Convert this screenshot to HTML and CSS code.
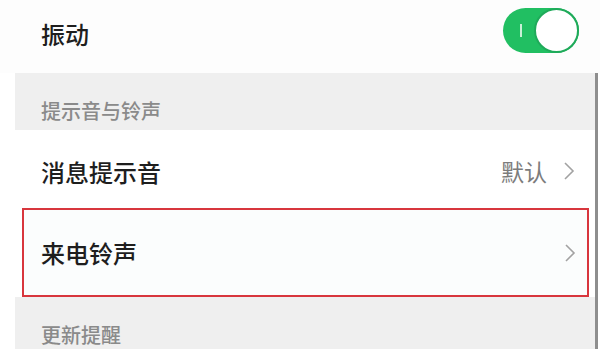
FILE: index.html
```html
<!DOCTYPE html>
<html lang="zh-CN">
<head>
  <meta charset="UTF-8" />
  <meta name="viewport" content="width=device-width, initial-scale=1.0"/>
  <title>新消息通知</title>
  <link rel="stylesheet" href="styles.css">
</head>
<body>
  <div class="screen">
    <div class="row-top">
      <span class="label">振动</span>
      <div class="switch on">
        <span class="mark"></span>
        <span class="knob"></span>
      </div>
    </div>

    <div class="panel">
      <div class="section-title">提示音与铃声</div>

      <div class="row">
        <span class="label">消息提示音</span>
        <div class="right">
          <span class="value">默认</span>
          <svg class="chevron" width="12" height="20" viewBox="0 0 12 20">
            <polyline points="2,2 10,10 2,18" />
          </svg>
        </div>
      </div>

      <div class="row-wrap">
        <div class="row boxed">
          <span class="label">来电铃声</span>
          <svg class="chevron" width="12" height="20" viewBox="0 0 12 20">
            <polyline points="2,2 10,10 2,18" />
          </svg>
        </div>
      </div>

      <div class="section-title last">更新提醒</div>
    </div>
  </div>
</body>
</html>
```

FILE: styles.css
```css
html, body {
  margin: 0;
  padding: 0;
  background: #fff;
}
body {
  font-family: "Noto Sans CJK SC", "Noto Sans", sans-serif;
  color: #222;
}
.screen {
  width: 600px;
  height: 349px;
  overflow: hidden;
}
.label {
  font-size: 24px;
  font-weight: 500;
  color: #1e1e1e;
}
.row-top {
  height: 73px;
  display: flex;
  align-items: center;
  justify-content: space-between;
  padding: 0 21px 12px 41px;
  box-sizing: border-box;
  background: #fdfdfd;
}
.row-top .label {
  margin-top: 5px;
}
.switch {
  position: relative;
  width: 76px;
  height: 45px;
  border-radius: 23px;
  background: #21bf62;
  box-sizing: border-box;
}
.switch .mark {
  position: absolute;
  left: 17px;
  top: 16px;
  width: 2px;
  height: 13px;
  background: #c9f0d6;
}
.switch .knob {
  position: absolute;
  right: 0;
  top: 0;
  width: 45px;
  height: 45px;
  border-radius: 50%;
  background: #fff;
  border: 2px solid #1faa5a;
  box-sizing: border-box;
}
.panel {
  margin-left: 15px;
  width: 580px;
  border-right: 3px solid #8e8e8e;
  background: #efefef;
  height: 276px;
}
.section-title {
  height: 57px;
  display: flex;
  align-items: center;
  padding: 17px 0 0 26px;
  box-sizing: border-box;
  font-size: 20px;
  font-weight: 500;
  color: #8a8a8a;
}
.section-title.last {
  height: 52px;
  padding-top: 22px;
}
.row {
  height: 78px;
  display: flex;
  align-items: center;
  justify-content: space-between;
  padding: 4px 20px 0 26px;
  box-sizing: border-box;
  background: #fff;
}
.right {
  display: flex;
  align-items: center;
  gap: 16px;
}
.value {
  font-size: 23px;
  color: #7c7c7c;
}
.chevron polyline {
  fill: none;
  stroke: #a2a2a2;
  stroke-width: 1.6;
}
.row-wrap {
  background: #fff;
  padding: 0 6px 0 7px;
}
.row.boxed {
  height: 89px;
  border: 2px solid #d8363d;
  padding: 0 11px 0 17px;
  background: #fbfdfd;
}
```
